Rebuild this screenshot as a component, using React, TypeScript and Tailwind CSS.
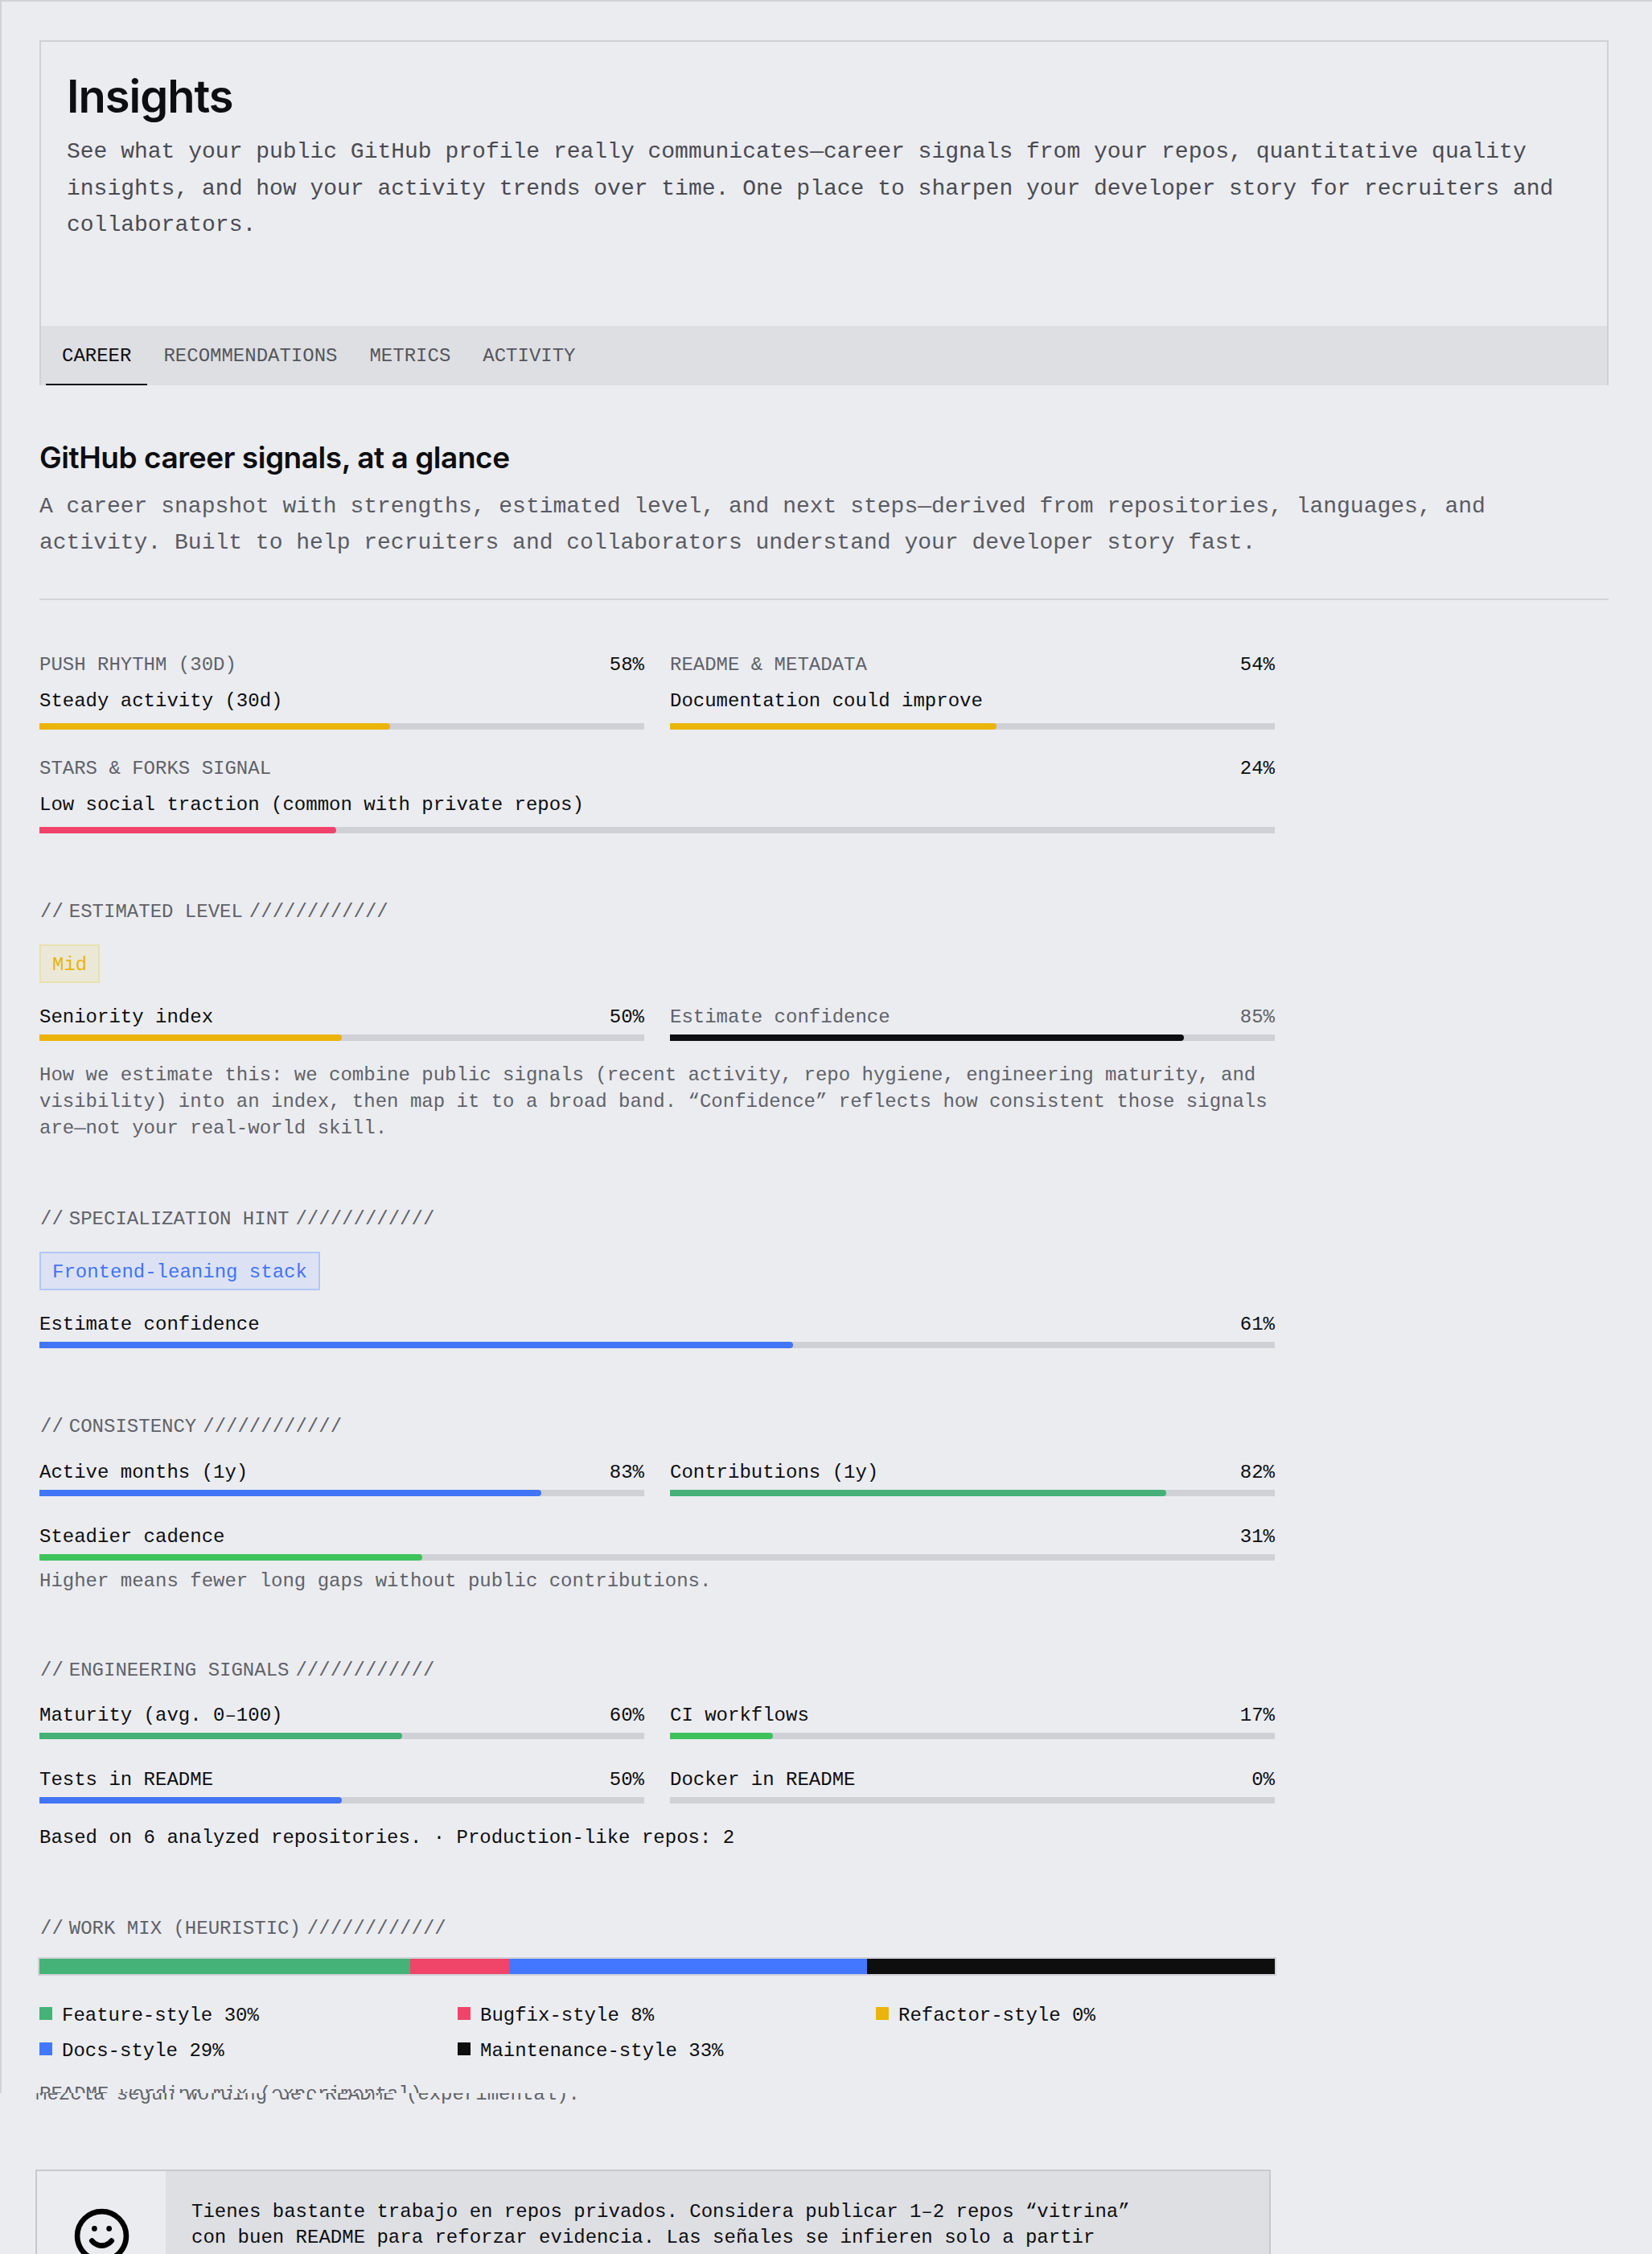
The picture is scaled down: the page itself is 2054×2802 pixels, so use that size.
import { Smile } from "lucide-react";

const MONO = "font-['Liberation_Mono',monospace]";

type Meter = {
  label: string;
  value: number;
  color: string;
  sub?: string;
  muted?: boolean;
  span?: boolean;
};

function Bar({ value, color }: { value: number; color: string }) {
  return (
    <div className="h-2 w-full bg-[#d0d1d6]">
      <div className={`h-full rounded-r-[4px] ${color}`} style={{ width: `${value}%` }} />
    </div>
  );
}

function MeterRow({ meter, barGap = "mt-[7px]" }: { meter: Meter; barGap?: string }) {
  return (
    <div className={meter.span ? "col-span-2" : ""}>
      <div className={`flex justify-between leading-[29px] ${meter.sub ? "pt-[3px] pb-[2px]" : "pt-[5px]"}`}>
        <span className={meter.muted ? "text-[#606269]" : "text-[#0d0e11]"}>{meter.label}</span>
        <span className={meter.muted && !meter.sub ? "text-[#606269]" : "text-[#0d0e11]"}>{meter.value}%</span>
      </div>
      {meter.sub && <div className="mt-[10px] pt-[4px] pb-[1px] leading-[29px] text-[#0d0e11]">{meter.sub}</div>}
      <div className={barGap}>
        <Bar value={meter.value} color={meter.color} />
      </div>
    </div>
  );
}

function SectionLabel({ children, className }: { children: string; className: string }) {
  return (
    <div className={`flex pt-[5px] leading-[29px] text-[#606269] ${className}`}>
      <span className="pl-[1px]">//</span>
      <span className="ml-[7px]">{children}</span>
      <span className="ml-2">////////////</span>
    </div>
  );
}

const tabs = ["CAREER", "RECOMMENDATIONS", "METRICS", "ACTIVITY"];

const signals: Meter[] = [
  { label: "PUSH RHYTHM (30D)", sub: "Steady activity (30d)", value: 58, color: "bg-[#ebb40a]", muted: true },
  { label: "README & METADATA", sub: "Documentation could improve", value: 54, color: "bg-[#ebb40a]", muted: true },
  {
    label: "STARS & FORKS SIGNAL",
    sub: "Low social traction (common with private repos)",
    value: 24,
    color: "bg-[#f1426b]",
    muted: true,
    span: true,
  },
];

const consistency: Meter[] = [
  { label: "Active months (1y)", value: 83, color: "bg-[#4274f6]" },
  { label: "Contributions (1y)", value: 82, color: "bg-[#45b077]" },
  { label: "Steadier cadence", value: 31, color: "bg-[#3dc25c]", span: true },
];

const engineering: Meter[] = [
  { label: "Maturity (avg. 0–100)", value: 60, color: "bg-[#45b077]" },
  { label: "CI workflows", value: 17, color: "bg-[#3dc25c]" },
  { label: "Tests in README", value: 50, color: "bg-[#4274f6]" },
  { label: "Docker in README", value: 0, color: "bg-[#4274f6]" },
];

const mix = [
  { label: "Feature-style", value: 30, color: "bg-[#45b377]" },
  { label: "Bugfix-style", value: 8, color: "bg-[#f04468]" },
  { label: "Refactor-style", value: 0, color: "bg-[#ebb40a]" },
  { label: "Docs-style", value: 29, color: "bg-[#4377ff]" },
  { label: "Maintenance-style", value: 33, color: "bg-[#0e0e0e]" },
];

export default function App() {
  return (
    <div className={`relative h-[2802px] overflow-hidden border-t-2 border-[#d0d2d8] bg-[#ebecf0] text-[24px] ${MONO}`}>
      <div className="absolute top-0 left-0 h-[2600px] w-[2px] bg-[#d0d2d8]" />
      <div className="pt-[48px] pl-[49px] pr-[54px]">
        <header className="border-2 border-b-0 border-[#d0d1d6]">
          <div className="h-[353px] px-8 pt-[34px]">
            <h1 className="font-['Inter',sans-serif] text-[56px] leading-[68px] font-semibold tracking-[-0.018em] text-[#0d0e11]">
              Insights
            </h1>
            <p className="mt-[12px] text-[28px] leading-[45.5px] text-[#4a4b52]">
              See what your public GitHub profile really communicates—career signals from your repos, quantitative
              quality insights, and how your activity trends over time. One place to sharpen your developer story for
              recruiters and collaborators.
            </p>
          </div>
          <nav className="flex h-[74px] bg-[#dedfe3] pl-[6px]">
            {tabs.map((tab, i) => (
              <div
                key={tab}
                className={`flex items-center border-b-2 px-5 pt-[3px] ${
                  i === 0 ? "border-[#0d0e11] text-[#0d0e11]" : "border-transparent text-[#55565c]"
                }`}
              >
                {tab}
              </div>
            ))}
          </nav>
        </header>

        <h2 className="mt-[68px] font-['Inter',sans-serif] text-[37px] leading-[44px] font-semibold tracking-[-0.012em] text-[#0d0e11]">
          GitHub career signals, at a glance
        </h2>
        <p className="mt-[15.5px] text-[28px] leading-[45.5px] text-[#5a5b62]">
          A career snapshot with strengths, estimated level, and next steps—derived from repositories, languages, and
          activity. Built to help recruiters and collaborators understand your developer story fast.
        </p>
        <hr className="mt-[46.5px] border-t-2 border-[#d4d5da]" />

        <div className="w-[1536px]">
          <div className="mt-[63px] grid grid-cols-2 gap-x-8 gap-y-[31px]">
            {signals.map((m) => (
              <MeterRow key={m.label} meter={m} barGap="mt-[12px]" />
            ))}
          </div>

          <SectionLabel className="mt-[78px]">ESTIMATED LEVEL</SectionLabel>
          <div className="mt-[26px] inline-block border-2 border-[#e9e0b0] bg-[#ebe8d8] px-[14px] pt-[4px] leading-[40px] text-[#ebb40a]">
            Mid
          </div>
          <div className="mt-[23px] grid grid-cols-2 gap-x-8">
            <MeterRow meter={{ label: "Seniority index", value: 50, color: "bg-[#ebb40a]" }} />
            <MeterRow meter={{ label: "Estimate confidence", value: 85, color: "bg-[#0d0e10]", muted: true }} />
          </div>
          <p className="mt-[26px] leading-[33px] text-[#606269]">
            How we estimate this: we combine public signals (recent activity, repo hygiene, engineering maturity, and
            visibility) into an index, then map it to a broad band. “Confidence” reflects how consistent those signals
            are—not your real-world skill.
          </p>

          <SectionLabel className="mt-[77px]">SPECIALIZATION HINT</SectionLabel>
          <div className="mt-[26px] inline-block border-2 border-[#b3c6f5] bg-[#dce2f3] px-[14px] pt-[4px] leading-[40px] text-[#4274f6]">
            Frontend-leaning stack
          </div>
          <div className="mt-[23px]">
            <MeterRow meter={{ label: "Estimate confidence", value: 61, color: "bg-[#4274f6]" }} />
          </div>

          <SectionLabel className="mt-[78px]">CONSISTENCY</SectionLabel>
          <div className="mt-[23px] grid grid-cols-2 gap-x-8 gap-y-[31px]">
            {consistency.map((m) => (
              <MeterRow key={m.label} meter={m} />
            ))}
          </div>
          <p className="mt-[9px] leading-[33px] text-[#606269]">Higher means fewer long gaps without public contributions.</p>

          <SectionLabel className="mt-[75px]">ENGINEERING SIGNALS</SectionLabel>
          <div className="mt-[22px] grid grid-cols-2 gap-x-8 gap-y-[31px]">
            {engineering.map((m) => (
              <MeterRow key={m.label} meter={m} />
            ))}
          </div>
          <p className="mt-[26px] leading-[33px] text-[#0d0e11]">
            Based on 6 analyzed repositories. · Production-like repos: 2
          </p>

          <SectionLabel className="mt-[77px]">WORK MIX (HEURISTIC)</SectionLabel>
          <div className="mt-[21px] -mx-[2px] flex h-[23px] border-2 border-[#d0d1d6]">
            {mix.map((m) => (
              <div key={m.label} className={m.color} style={{ width: `${m.value}%` }} />
            ))}
          </div>
          <div className="mt-[30.5px] grid grid-cols-3 gap-x-6 gap-y-[11px] text-[#0d0e11]">
            {mix.map((m) => (
              <div key={m.label} className="flex items-center gap-3">
                <span className={`h-4 w-4 ${m.color}`} />
                <span className="pt-[5px] leading-[28px]">
                  {m.label} {m.value}%
                </span>
              </div>
            ))}
          </div>

          {/* the capture tore here: old and new caption share one line */}
          <div className="relative mt-[23px] h-[33px] leading-[33px] whitespace-nowrap text-[#606269]">
            <div className="absolute top-0 left-0 h-[15.5px] overflow-hidden">README wording mix (experimental)</div>
            <div className="absolute top-[15.5px] left-[-5px] h-[17.5px] overflow-hidden">
              <div className="mt-[-15.5px]">Mezcla según wording del README (experimental).</div>
            </div>
          </div>

          <div className="mt-[77.5px] ml-[-5px] flex h-[200px] w-[1536px] border-2 border-[#c8c9ce]">
            <div className="flex w-[160px] shrink-0 justify-center pt-[43.5px] text-black">
              <Smile size={73} strokeWidth={2.2} />
            </div>
            <p className="flex-1 bg-[#dedfe3] pt-[35px] pl-8 leading-[32px] text-[#0d0e11]">
              Tienes bastante trabajo en repos privados. Considera publicar 1–2 repos “vitrina”
              <br />
              con buen README para reforzar evidencia. Las señales se infieren solo a partir
              <br />
              repos y metadatos públicos.
            </p>
          </div>
        </div>
      </div>
    </div>
  );
}
